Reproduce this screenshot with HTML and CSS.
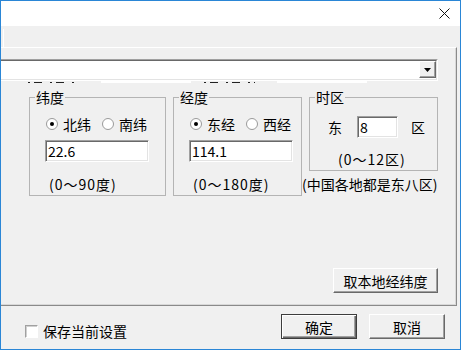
FILE: index.html
```html
<!DOCTYPE html>
<html>
<head>
    <meta charset="utf-8">
    <title>经纬度设置</title>
    <link rel="stylesheet" href="styles.css">
</head>
<body>

<div class="window">
    <div class="titlebar">
        <svg class="close" width="11" height="11" viewBox="0 0 11 11"><path d="M0.5 0.5L10.5 10.5M10.5 0.5L0.5 10.5" stroke="#111" stroke-width="1"/></svg>
    </div>
    <div class="tabstrip"><span class="tab-edge"></span></div>

    <div class="panel">
        <div class="combo">
            <div class="combo-field">
                <div class="combo-btn">
                    <svg width="7" height="4" viewBox="0 0 7 4"><path d="M0 0H7L3.5 4Z" fill="#000"/></svg>
                </div>
            </div>
        </div>
        <!-- tops of the hidden row under the combo -->
        <div class="peek">
            <span class="peek-mark m1"></span>
            <span class="peek-white w1"></span>
            <span class="peek-mark m2"></span>
            <span class="peek-white w2"></span>
        </div>

        <div class="groups">
            <fieldset class="group lat">
                <legend>纬度</legend>
                <div class="radios">
                    <label class="radio"><span class="dot on"></span>北纬</label>
                    <label class="radio"><span class="dot"></span>南纬</label>
                </div>
                <div class="field wide">22.6</div>
                <div class="hint">(0～90度)</div>
            </fieldset>

            <fieldset class="group lng">
                <legend>经度</legend>
                <div class="radios">
                    <label class="radio"><span class="dot on"></span>东经</label>
                    <label class="radio"><span class="dot"></span>西经</label>
                </div>
                <div class="field wide">114.1</div>
                <div class="hint">(0～180度)</div>
            </fieldset>

            <div class="zone-col">
                <fieldset class="group zone">
                    <legend>时区</legend>
                    <div class="zone-row">
                        <span>东</span>
                        <div class="field short">8</div>
                        <span>区</span>
                    </div>
                    <div class="hint zone-hint">(0～12区)</div>
                </fieldset>
                <div class="note">(中国各地都是东八区)</div>
            </div>
        </div>

        <div class="actions">
            <button class="btn local">取本地经纬度</button>
        </div>
    </div>

    <div class="footer">
        <label class="check"><span class="box"></span>保存当前设置</label>
        <div class="buttons">
            <button class="btn default">确定</button>
            <button class="btn">取消</button>
        </div>
    </div>
</div>

</body>
</html>
```

FILE: styles.css
```css
:root {
    --face: #f0f0f0;
    --shadow: #a0a0a0;
    --dark: #696969;
    --light: #e3e3e3;
}

body {
    margin: 0;
    font-family: "Noto Sans CJK SC", sans-serif;
    font-size: 14px;
    line-height: 16px;
    color: #000;
}

.window {
    width: 461px;
    height: 350px;
    box-sizing: border-box;
    border: 1px solid #2a86d6;
    background: var(--face);
    display: flex;
    flex-direction: column;
}

.titlebar {
    height: 25px;
    background: #fff;
    display: flex;
    justify-content: flex-end;
    align-items: flex-start;
}

.close {
    margin: 7px 10px 0 0;
}

.tabstrip {
    height: 21px;
}

.tab-edge {
    display: block;
    width: 1px;
    height: 18px;
    margin: 3px 0 0 2px;
    background: #fff;
}

.panel {
    height: 259px;
    box-sizing: border-box;
    margin-right: 3px;
    border-top: 1px solid #fff;
    border-right: 1px solid #8a8a8a;
    border-bottom: 1px solid #8a8a8a;
    box-shadow: inset -1px -1px 0 #d8d8d8;
}

/* combo box, left part cut off */
.combo {
    margin: 11px 18px 0 0;
    border-top: 1px solid var(--shadow);
    border-right: 1px solid #fff;
    border-bottom: 1px solid #fff;
}

.combo-field {
    height: 18px;
    background: #fff;
    border-top: 1px solid var(--dark);
    border-right: 1px solid var(--light);
    border-bottom: 1px solid var(--light);
    display: flex;
    justify-content: flex-end;
    align-items: flex-start;
}

.combo-btn {
    width: 17px;
    height: 17px;
    box-sizing: border-box;
    background: var(--face);
    border: 1px solid;
    border-color: #fff var(--dark) var(--dark) #fff;
    box-shadow: inset -1px -1px 0 var(--shadow);
    display: flex;
    align-items: center;
    justify-content: center;
}

.peek {
    height: 2px;
    display: flex;
}

.peek-mark {
    height: 1px;
    margin-top: 1px;
    background: repeating-linear-gradient(90deg, #222 0 2px, transparent 2px 6px, #222 6px 14px, transparent 14px 22px);
}

.peek-white {
    height: 2px;
    background: #fff;
}

.m1 { margin-left: 27px; width: 50px; }
.w1 { margin-left: 23px; width: 90px; }
.m2 { margin-left: 13px; width: 51px; }
.w2 { margin-left: 22px; width: 90px; }

.groups {
    display: flex;
    align-items: flex-start;
    gap: 7px;
    margin-top: 6px;
    padding-left: 28px;
}

.group {
    margin: 0;
    padding: 0 0 3px 0;
    min-width: 0;
    box-sizing: border-box;
    border: 1px solid #b4b4b4;
    width: 129px;
}

.group.lat {
    width: 137px;
}

.group legend {
    margin-left: 5px;
    padding: 0 1px;
    line-height: 16px;
}

.radios {
    display: flex;
    gap: 11px;
    margin: 11px 0 0 16px;
}

.radio {
    display: flex;
    align-items: center;
    gap: 5px;
}

.dot {
    width: 12px;
    height: 12px;
    box-sizing: border-box;
    border-radius: 50%;
    border: 1px solid #9a9a9a;
    background: #fff;
    display: flex;
    align-items: center;
    justify-content: center;
}

.dot.on::after {
    content: "";
    width: 4px;
    height: 4px;
    border-radius: 50%;
    background: #000;
}

.field {
    height: 22px;
    box-sizing: border-box;
    background: #fff;
    border: 1px solid;
    border-color: var(--shadow) #fff #fff var(--shadow);
    box-shadow: inset 1px 1px 0 var(--dark), inset -1px -1px 0 var(--light);
    padding: 2px 0 0 2px;
    line-height: 17px;
}

.field.wide {
    width: 104px;
    margin: 8px 0 0 15px;
}

.field.short {
    width: 41px;
}

.hint {
    margin: 14px 0 0 19px;
    letter-spacing: 1px;
}

.zone-col {
    display: flex;
    flex-direction: column;
}

.zone-row {
    display: flex;
    align-items: center;
    margin: 11px 0 0 18px;
}

.zone-row .field {
    margin: 0 13px 0 15px;
}

.zone-hint {
    margin: 13px 0 0 28px;
}

.note {
    margin: 5px 0 0 -7px;
    white-space: nowrap;
}

.actions {
    display: flex;
    justify-content: flex-end;
    margin-top: 72px;
    padding-right: 18px;
}

.btn {
    height: 25px;
    box-sizing: border-box;
    background: var(--face);
    border: 1px solid;
    border-color: #fff var(--dark) var(--dark) #fff;
    box-shadow: inset -1px -1px 0 var(--shadow);
    font-family: "Noto Sans CJK SC", sans-serif;
    font-size: 14px;
    line-height: 16px;
    color: #000;
    padding: 0;
    width: 76px;
}

.btn.local {
    width: 105px;
}

.btn.default {
    border-color: #3c3c3c;
    box-shadow: inset 1px 1px 0 #fff, inset -1px -1px 0 var(--dark), inset -2px -2px 0 var(--shadow);
}

.footer {
    height: 43px;
    display: flex;
    align-items: flex-start;
    padding: 8px 15px 0 24px;
    box-sizing: border-box;
}

.check {
    display: flex;
    align-items: center;
    gap: 5px;
    margin-top: 9px;
}

.box {
    width: 13px;
    height: 13px;
    box-sizing: border-box;
    background: #fff;
    border: 1px solid;
    border-color: var(--shadow) #fff #fff var(--shadow);
    box-shadow: inset 1px 1px 0 #d0d0d0;
}

.buttons {
    display: flex;
    gap: 12px;
    margin-left: auto;
}
```
